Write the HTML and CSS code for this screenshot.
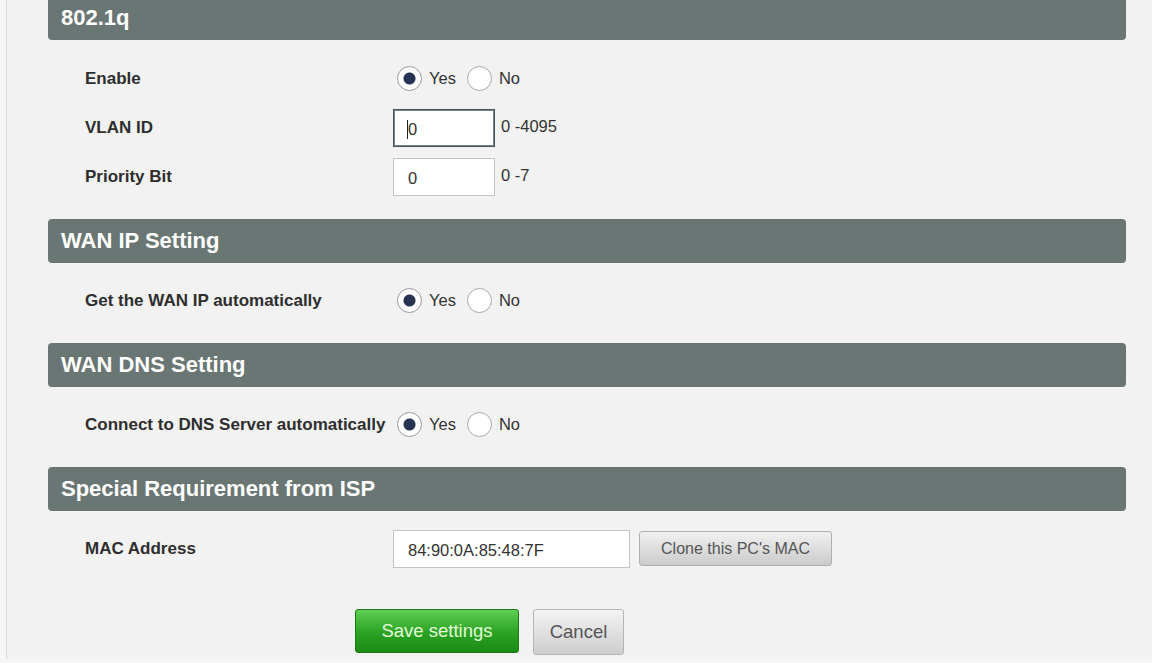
FILE: index.html
```html
<!DOCTYPE html>
<html lang="en">
<head>
  <meta charset="UTF-8" />
  <title>Internet Setup</title>
  <link rel="stylesheet" href="styles.css">
</head>
<body>
  <div class="page">
    <div class="section first">
      <h2>802.1q</h2>
      <div class="rows">
        <div class="row">
          <label class="name">Enable</label>
          <div class="ctrl">
            <input type="radio" name="vlan" checked><span class="opt">Yes</span>
            <input type="radio" name="vlan"><span class="opt">No</span>
          </div>
        </div>
        <div class="row">
          <label class="name">VLAN ID</label>
          <div class="ctrl">
            <span class="field focused"><input type="text" class="short" value="0"></span>
            <span class="hint">0 -4095</span>
          </div>
        </div>
        <div class="row">
          <label class="name">Priority Bit</label>
          <div class="ctrl">
            <input type="text" class="short" value="0">
            <span class="hint">0 -7</span>
          </div>
        </div>
      </div>
    </div>

    <div class="section">
      <h2>WAN IP Setting</h2>
      <div class="rows">
        <div class="row">
          <label class="name">Get the WAN IP automatically</label>
          <div class="ctrl">
            <input type="radio" name="wanip" checked><span class="opt">Yes</span>
            <input type="radio" name="wanip"><span class="opt">No</span>
          </div>
        </div>
      </div>
    </div>

    <div class="section">
      <h2>WAN DNS Setting</h2>
      <div class="rows">
        <div class="row">
          <label class="name">Connect to DNS Server automatically</label>
          <div class="ctrl">
            <input type="radio" name="dns" checked><span class="opt">Yes</span>
            <input type="radio" name="dns"><span class="opt">No</span>
          </div>
        </div>
      </div>
    </div>

    <div class="section">
      <h2>Special Requirement from ISP</h2>
      <div class="rows">
        <div class="row">
          <label class="name">MAC Address</label>
          <div class="ctrl">
            <input type="text" class="long" value="84:90:0A:85:48:7F">
            <button class="btn clone">Clone this PC's MAC</button>
          </div>
        </div>
      </div>
    </div>

    <div class="actions">
      <button class="btn save">Save settings</button>
      <button class="btn cancel">Cancel</button>
    </div>
  </div>
</body>
</html>
```

FILE: styles.css
```css
body {
  margin: 0;
  padding: 0;
  background: #f6f6f6;
  font-family: 'Liberation Sans', Arial, sans-serif;
  color: #333;
}

.page {
  margin-left: 6px;
  border-left: 1px solid #dadada;
  background: #f2f2f2;
  min-height: 663px;
  padding-left: 41px;
  padding-right: 26px;
}

.section {
  margin-bottom: 18px;
}

.section.first {
  margin-top: -4px;
}

.section h2 {
  margin: 0;
  height: 44px;
  line-height: 44px;
  padding-left: 13px;
  background: #6a7674;
  color: #fff;
  font-size: 22px;
  font-weight: bold;
  border-radius: 4px;
}

.rows {
  padding-top: 13px;
}

.first .rows {
  padding-top: 14px;
}

.row {
  display: flex;
  align-items: center;
  height: 49px;
  padding-left: 37px;
}

.name {
  width: 308px;
  flex-shrink: 0;
  font-size: 17px;
  font-weight: bold;
  color: #2e2e2e;
}

.ctrl {
  display: flex;
  align-items: center;
}

input[type="radio"] {
  appearance: none;
  -webkit-appearance: none;
  width: 25px;
  height: 25px;
  margin: 0 7px 0 4px;
  border: 1px solid #a9a9a9;
  border-radius: 50%;
  background: #fff;
}

input[type="radio"] + .opt + input[type="radio"] {
  margin-left: 11px;
}

input[type="radio"]:checked {
  background: radial-gradient(circle, #263352 0, #263352 5.5px, #fff 6.5px);
  border-color: #999;
}

.opt {
  font-size: 16.5px;
  color: #333;
}

input[type="text"] {
  box-sizing: border-box;
  height: 38px;
  border: 1px solid #c4c4c4;
  background: #fff;
  padding: 3px 0 0 14px;
  font-family: 'Liberation Sans', Arial, sans-serif;
  font-size: 16.5px;
  color: #333;
  outline: none;
}

input.short {
  width: 102px;
}

input.long {
  width: 237px;
}

.field {
  position: relative;
  display: inline-flex;
}

.field.focused input {
  border-color: #48525e;
  box-shadow: inset 0 0 0 1px #7a838c;
}

.field.focused::after {
  content: "";
  position: absolute;
  left: 14px;
  top: 11px;
  width: 1px;
  height: 19px;
  background: #222;
}

.hint {
  margin-left: 6px;
  margin-top: -3px;
  font-size: 16.5px;
  color: #333;
}

.btn {
  font-family: 'Liberation Sans', Arial, sans-serif;
  cursor: pointer;
  border-radius: 3px;
}

.clone {
  margin-left: 9px;
  width: 193px;
  height: 35px;
  font-size: 16px;
  color: #555;
  border: 1px solid #b0b0b0;
  background: linear-gradient(to bottom, #f1f1f1, #cbcbcb);
}

.actions {
  display: flex;
  align-items: flex-start;
  gap: 14px;
  padding-left: 307px;
  padding-top: 18px;
}

.save {
  width: 164px;
  height: 44px;
  font-size: 18.5px;
  color: #e4fbd8;
  border: 1px solid #1c7a16;
  background: linear-gradient(to bottom, #5fcf54, #2aa223 55%, #1a8a14);
}

.cancel {
  width: 91px;
  height: 46px;
  font-size: 18.5px;
  color: #555;
  border: 1px solid #b5b5b5;
  background: linear-gradient(to bottom, #f4f4f4, #cdcdcd);
}
```
